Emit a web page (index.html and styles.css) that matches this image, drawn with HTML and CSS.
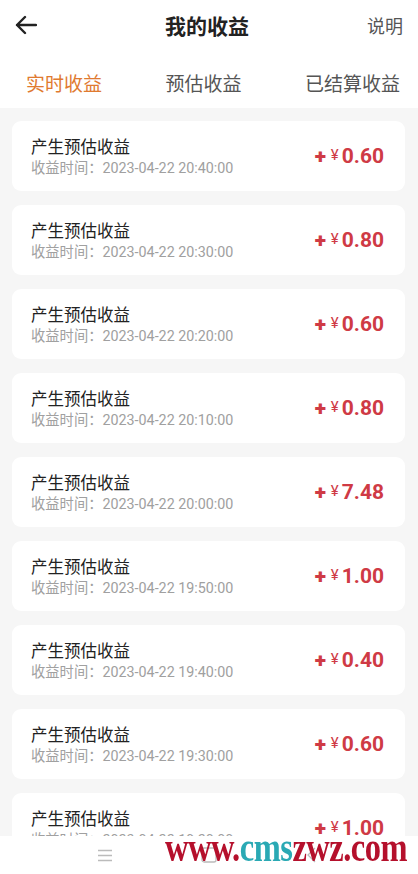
FILE: index.html
```html
<!DOCTYPE html>
<html lang="zh">
<head>
  <meta charset="UTF-8" />
  <meta name="viewport" content="width=device-width, initial-scale=1.0" />
  <title>我的收益</title>
  <link rel="stylesheet" href="styles.css">
</head>
<body>
  <header>
    <div class="back">
      <svg width="22" height="20" viewBox="0 0 22 20"><path d="M10 2 L2 10 L10 18 M2 10 H21" fill="none" stroke="#222" stroke-width="2.4" stroke-linecap="round" stroke-linejoin="round"/></svg>
    </div>
    <h1>我的收益</h1>
    <div class="help">说明</div>
  </header>

  <nav class="tabs">
    <span class="tab active">实时收益</span>
    <span class="tab">预估收益</span>
    <span class="tab">已结算收益</span>
  </nav>

  <div id="list">
    <div class="item"><div class="info"><div class="name">产生预估收益</div><div class="time">收益时间：2023-04-22 20:40:00</div></div><div class="amount"><b>+</b><i>¥</i>0.60</div></div>
    <div class="item"><div class="info"><div class="name">产生预估收益</div><div class="time">收益时间：2023-04-22 20:30:00</div></div><div class="amount"><b>+</b><i>¥</i>0.80</div></div>
    <div class="item"><div class="info"><div class="name">产生预估收益</div><div class="time">收益时间：2023-04-22 20:20:00</div></div><div class="amount"><b>+</b><i>¥</i>0.60</div></div>
    <div class="item"><div class="info"><div class="name">产生预估收益</div><div class="time">收益时间：2023-04-22 20:10:00</div></div><div class="amount"><b>+</b><i>¥</i>0.80</div></div>
    <div class="item"><div class="info"><div class="name">产生预估收益</div><div class="time">收益时间：2023-04-22 20:00:00</div></div><div class="amount"><b>+</b><i>¥</i>7.48</div></div>
    <div class="item"><div class="info"><div class="name">产生预估收益</div><div class="time">收益时间：2023-04-22 19:50:00</div></div><div class="amount"><b>+</b><i>¥</i>1.00</div></div>
    <div class="item"><div class="info"><div class="name">产生预估收益</div><div class="time">收益时间：2023-04-22 19:40:00</div></div><div class="amount"><b>+</b><i>¥</i>0.40</div></div>
    <div class="item"><div class="info"><div class="name">产生预估收益</div><div class="time">收益时间：2023-04-22 19:30:00</div></div><div class="amount"><b>+</b><i>¥</i>0.60</div></div>
    <div class="item"><div class="info"><div class="name">产生预估收益</div><div class="time">收益时间：2023-04-22 19:20:00</div></div><div class="amount"><b>+</b><i>¥</i>1.00</div></div>
  </div>

  <footer>
    <svg class="nav-ico" width="16" height="13" viewBox="0 0 16 13"><path d="M1 1.5 H15 M1 6.5 H15 M1 11.5 H15" stroke="#bbb" stroke-width="1.3"/></svg>
    <svg class="nav-ico" width="16" height="16" viewBox="0 0 16 16"><rect x="1" y="1" width="14" height="14" rx="2" fill="none" stroke="#bbb" stroke-width="1.3"/></svg>
    <svg class="nav-ico" width="16" height="16" viewBox="0 0 16 16"><path d="M11 1 L4 8 L11 15" fill="none" stroke="#bbb" stroke-width="1.3"/></svg>
    <div class="mark">www.<span>cms</span>zwz.com</div>
  </footer>
</body>
</html>
```

FILE: styles.css
```css
* { box-sizing: border-box; }
body {
  margin: 0;
  height: 874px;
  overflow: hidden;
  font-family: "Noto Sans CJK SC", "Noto Sans", sans-serif;
  background: #f6f6f6;
  color: #222;
}
header {
  height: 50px;
  background: #fff;
  display: flex;
  align-items: center;
  justify-content: space-between;
  padding: 0 15px;
}
header .back { width: 60px; display: flex; align-items: center; }
header h1 { margin: 0 0 0 -4px; font-size: 21px; font-weight: 700; color: #222; }
header .help { width: 60px; text-align: right; font-size: 18px; color: #555; }

.tabs {
  height: 58px;
  background: #fff;
  display: flex;
  align-items: center;
  justify-content: space-between;
  padding: 6px 18px 0 26px;
}
.tab { font-size: 19px; color: #555; }
.tab.active { color: #e07a30; }

#list {
  padding: 13px 13px 0 12px;
  display: flex;
  flex-direction: column;
  gap: 14px;
}
.item {
  height: 70px;
  background: #fff;
  border-radius: 9px;
  display: flex;
  align-items: center;
  justify-content: space-between;
  padding: 0 21px 0 19px;
}
.name { font-size: 16.5px; color: #222; line-height: 22px; }
.time { font-family: Roboto, "Noto Sans CJK SC", sans-serif; font-size: 14.3px; color: #a0a0a0; line-height: 20px; margin-top: 1px; }
.amount {
  font-family: Roboto, "Noto Sans", sans-serif;
  font-size: 21px;
  font-weight: 700;
  color: #cf3a45;
  display: flex;
  align-items: baseline;
}
.amount b { font-size: 21px; margin-right: 5px; }
.amount i { font-style: normal; font-weight: 400; font-size: 15px; margin-right: 3px; position: relative; top: -3px; }

footer {
  position: fixed;
  left: 0;
  right: 0;
  bottom: 0;
  height: 38px;
  background: #fff;
  display: flex;
  align-items: center;
  justify-content: space-between;
  padding: 0 98px 0 97px;
}
.mark {
  position: absolute;
  left: 165px;
  top: -2px;
  font-family: "Liberation Serif", serif;
  font-weight: 700;
  font-size: 32.5px;
  letter-spacing: -0.5px;
  color: #b5102c;
  transform: scaleY(1.3);
  transform-origin: left bottom;
}
.mark span { color: #2aa9b4; }
```
